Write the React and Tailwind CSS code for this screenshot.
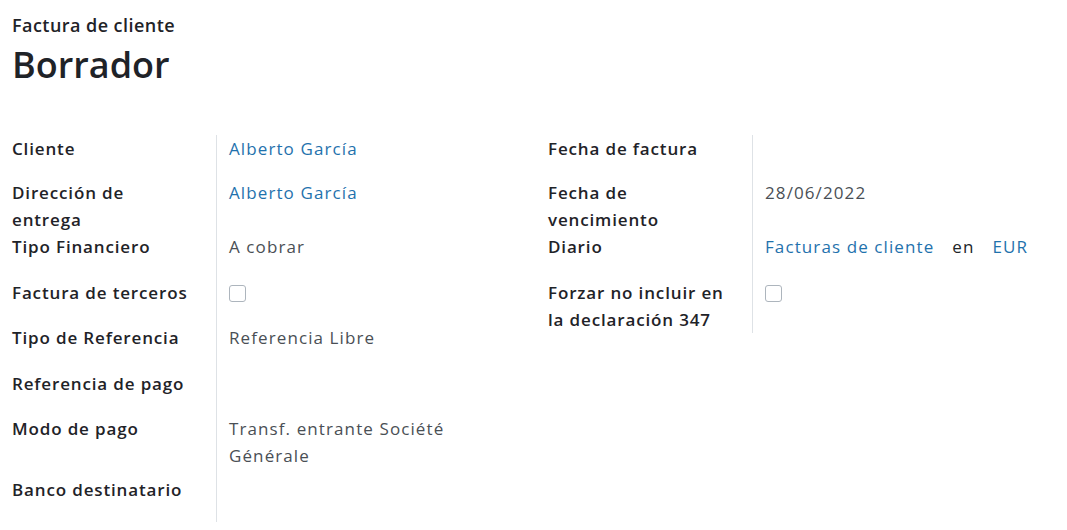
import React from 'react';

const leftRows = [
  { label: 'Cliente', h: 'h-[44px]', value: <span className="text-[#1f72ad]">Alberto García</span> },
  { label: <>Dirección de<br />entrega</>, h: 'h-[54px]', value: <span className="text-[#1f72ad]">Alberto García</span> },
  { label: 'Tipo Financiero', h: 'h-[46px]', value: 'A cobrar' },
  { label: 'Factura de terceros', h: 'h-[45px]', value: <Checkbox /> },
  { label: 'Tipo de Referencia', h: 'h-[46px]', value: 'Referencia Libre' },
  { label: 'Referencia de pago', h: 'h-[45px]', value: null },
  { label: 'Modo de pago', h: 'h-[61px]', value: <>Transf. entrante Société<br />Générale</> },
  { label: 'Banco destinatario', h: 'h-[46px]', value: null },
];

const rightRows = [
  { label: 'Fecha de factura', h: 'h-[44px]', value: null },
  { label: <>Fecha de<br />vencimiento</>, h: 'h-[54px]', value: '28/06/2022' },
  {
    label: 'Diario',
    h: 'h-[46px]',
    value: (
      <span className="flex gap-[18px]">
        <span className="text-[#1f72ad]">Facturas de cliente</span>
        <span className="text-[#212529]">en</span>
        <span className="text-[#1f72ad]">EUR</span>
      </span>
    ),
  },
  { label: <>Forzar no incluir en<br />la declaración 347</>, h: 'h-[54px]', value: <Checkbox /> },
];

function Checkbox() {
  return <span className="mt-[6px] block w-[17px] h-[17px] rounded-[3px] border border-[#adb5bd] bg-white"></span>;
}

function Group({ rows }) {
  return (
    <div className="grid grid-cols-[205px_1fr]">
      {rows.map((r, i) => (
        <React.Fragment key={i}>
          <div className={`${r.h} border-r border-[#dee2e6] font-semibold text-[#1f2328] tracking-[0.85px]`}>{r.label}</div>
          <div className={`${r.h} pl-3 text-[#4a4f55] tracking-[1.1px]`}>{r.value}</div>
        </React.Fragment>
      ))}
    </div>
  );
}

export default function App() {
  return (
    <div
      className="w-[1067px] h-[530px] bg-white px-3 overflow-hidden text-[17px] leading-[27px]"
      style={{ fontFamily: '"Open Sans", "Noto Sans", sans-serif' }}
    >
      {/* Header */}
      <div className="pt-[12px]">
        <div className="text-[18px] font-semibold text-[#1f2328] leading-[26px] tracking-[0.45px]">Factura de cliente</div>
        <h1 className="text-[36px] font-semibold text-[#1f2328] leading-[48px] mt-[3px]">Borrador</h1>
      </div>

      {/* Groups */}
      <div className="flex mt-[46px]">
        <div className="w-[536px]">
          <Group rows={leftRows} />
        </div>
        <div className="flex-1">
          <Group rows={rightRows} />
        </div>
      </div>
    </div>
  );
}
